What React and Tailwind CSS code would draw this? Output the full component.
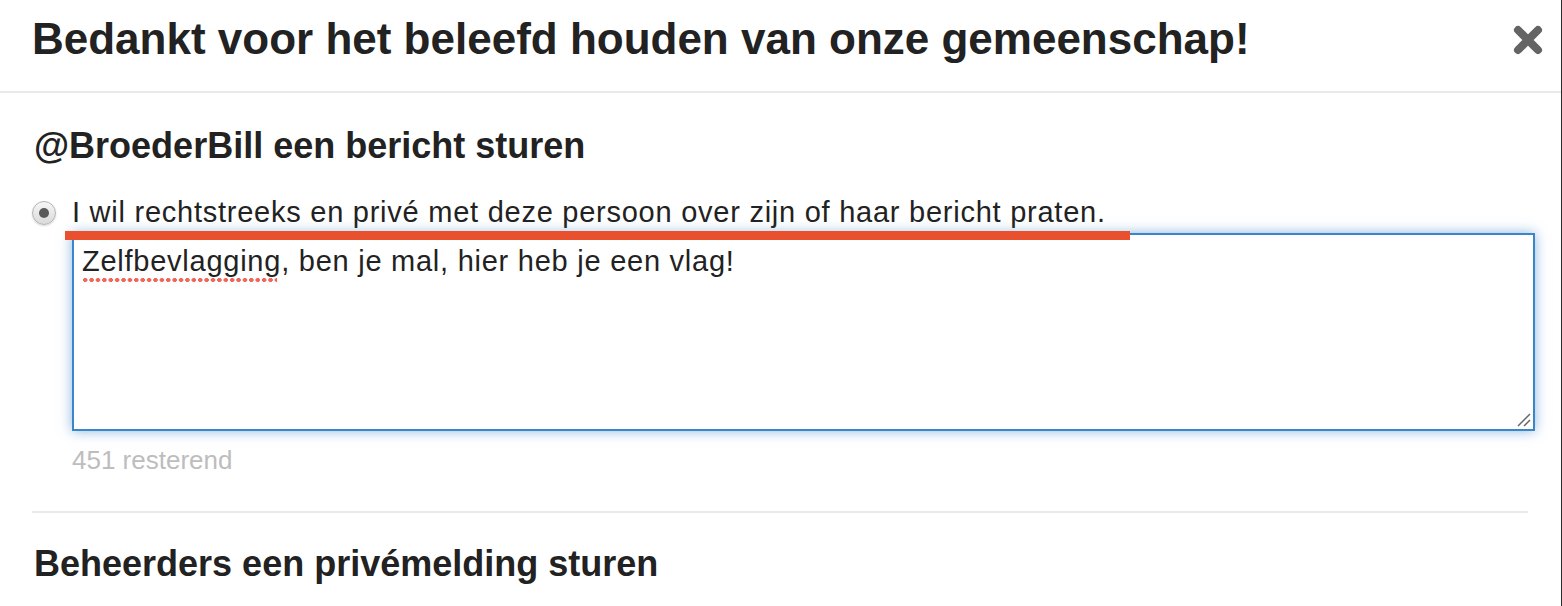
import React from 'react';

function CloseIcon() {
  return (
    <svg width="30" height="30" viewBox="0 0 30 30" className="shrink-0">
      <path d="M5 5 L25 25 M25 5 L5 25" stroke="#646464" strokeWidth="8" strokeLinecap="round" />
    </svg>
  );
}

function Radio() {
  return (
    <div className="w-[24px] h-[24px] rounded-full border border-[#b4b4b4] bg-gradient-to-b from-[#f6f6f6] to-[#dadada] shadow-[0_1px_2px_rgba(0,0,0,0.15)] flex items-center justify-center shrink-0">
      <div className="w-[10px] h-[10px] rounded-full bg-[#5a5a5a]" />
    </div>
  );
}

export default function App() {
  return (
    <div className="relative w-full h-[606px] bg-white border-r border-[#2a2a2a] overflow-hidden text-[#222] font-['Liberation_Sans',Arial,sans-serif]">
      <div className="h-[93px] border-b-2 border-[#e9e9e9] flex items-start justify-between pl-[32px] pr-[18px] pt-[17px]">
        <h1 className="text-[44px] leading-none font-bold">Bedankt voor het beleefd houden van onze gemeenschap!</h1>
        <div className="pt-[8px]">
          <CloseIcon />
        </div>
      </div>

      <div className="pl-[32px] pr-[33px] pt-[35px]">
        <h2 className="text-[36px] leading-none font-bold pl-[2px]">@BroederBill een bericht sturen</h2>

        <div className="flex items-center gap-[16px] mt-[34px]">
          <Radio />
          <span className="text-[29px] leading-none tracking-[0.75px]">I wil rechtstreeks en privé met deze persoon over zijn of haar bericht praten.</span>
        </div>

        <div className="ml-[40px] mt-[6px]">
          <div className="relative w-[1463px] h-[198px] border-2 border-[#3b86c8] shadow-[0_0_12px_rgba(59,134,200,0.6)] bg-white pl-[8px] pt-[12px] text-[29px] leading-none tracking-[0.75px]">
            <span className="relative">
              Zelfbevlagging
              <span className="absolute left-0 right-[4px] -bottom-[6px] h-[6px] bg-[radial-gradient(circle,#f0675a_1.9px,transparent_2.4px)] bg-[length:6.4px_6px] bg-repeat-x" />
            </span>
            , ben je mal, hier heb je een vlag!
            <svg width="16" height="16" viewBox="0 0 16 16" className="absolute right-[2px] bottom-[2px]">
              <path d="M3 15 L15 3 M9 15 L15 9" stroke="#666" strokeWidth="1.5" />
            </svg>
          </div>
          <div className="mt-[16px] text-[26px] leading-none text-[#bdbdbd]">451 resterend</div>
        </div>

        <div className="mt-[38px] h-[2px] bg-[#e9e9e9]" />

        <h2 className="mt-[33px] text-[36px] leading-none font-bold pl-[2px]">Beheerders een privémelding sturen</h2>
      </div>

      <div className="absolute left-[65px] top-[231px] w-[1065px] h-[9px] bg-[#e8502e]" />
    </div>
  );
}
